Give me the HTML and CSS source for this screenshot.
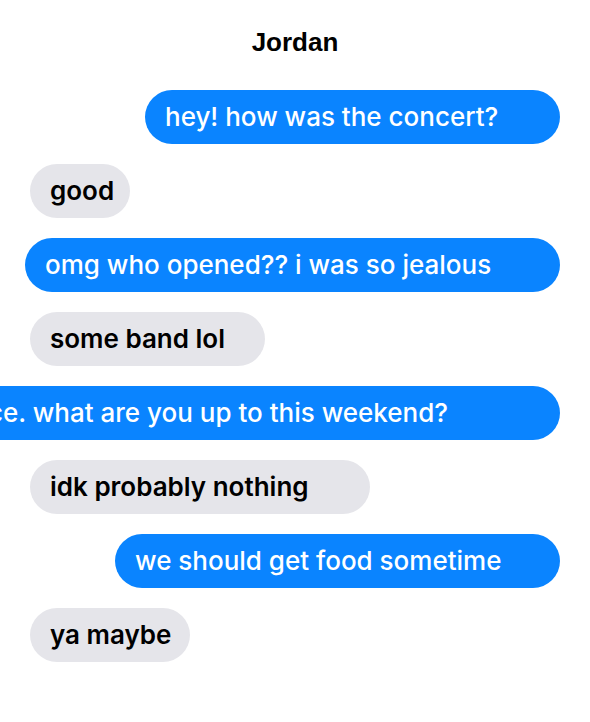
FILE: index.html
```html
<!doctype html>
<html>
<head>
	<meta charset="utf-8">
	<title>Jordan</title>
	<link rel="stylesheet" href="styles.css">
</head>
<body>
	<h1 class="contact">Jordan</h1>

	<div class="thread">
		<div class="msg sent w-415">hey! how was the concert?</div>
		<div class="msg received w-100">good</div>
		<div class="msg sent w-535">omg who opened?? i was so jealous</div>
		<div class="msg received w-235">some band lol</div>
		<div class="msg sent long">oh nice. what are you up to this weekend?</div>
		<div class="msg received w-340">idk probably nothing</div>
		<div class="msg sent w-445">we should get food sometime</div>
		<div class="msg received w-160">ya maybe</div>
	</div>
</body>
</html>
```

FILE: styles.css
```css
body {
	margin: 0;
	overflow: hidden;
	background: #fff;
	font-family: Inter, "Noto Sans", sans-serif;
}

.contact {
	margin: 0;
	padding-top: 29px;
	text-align: center;
	font-family: "Liberation Sans", Arial, sans-serif;
	font-size: 26px;
	font-weight: bold;
	line-height: 26px;
	color: #000;
}

.thread {
	display: flex;
	flex-direction: column;
	gap: 20px;
	padding: 35px 30px 0 30px;
}

.msg {
	box-sizing: border-box;
	flex: none;
	height: 54px;
	line-height: 54px;
	padding: 0 20px;
	border-radius: 27px;
	font-size: 26px;
	white-space: nowrap;
}

.sent {
	align-self: flex-end;
	background-color: #0a84ff;
	color: #fff;
	font-weight: 500;
}

.received {
	align-self: flex-start;
	background-color: #e5e5ea;
	color: #000;
	font-weight: 600;
}

/* bubble widths */
.w-100 { width: 100px; }
.w-160 { width: 160px; }
.w-235 { width: 235px; }
.w-340 { width: 340px; }
.w-415 { width: 415px; }
.w-445 { width: 445px; }
.w-535 { width: 535px; }

.long {
	padding-right: 112px;
}
```
